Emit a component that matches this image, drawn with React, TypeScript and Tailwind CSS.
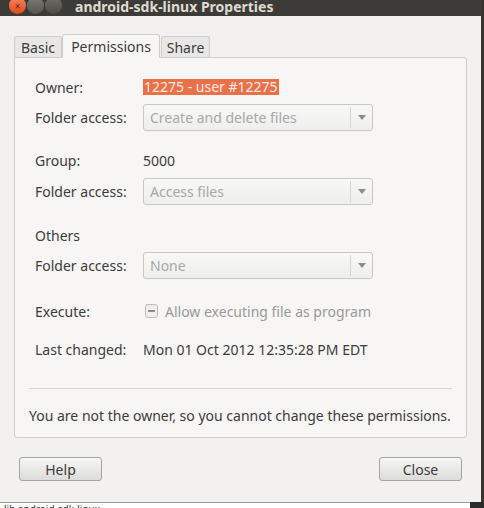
import React from "react";

const font = { fontFamily: '"Noto Sans", "DejaVu Sans", sans-serif' };

function Combo({ value }: { value: string }) {
  return (
    <div className="flex h-[27px] w-[230px] items-stretch rounded-[3px] border border-[#c9c7c3] bg-gradient-to-b from-[#f8f8f7] to-[#eeeeec]">
      <div className="flex flex-1 items-center pl-[6px] text-[14px] text-[#a9a8a5]">{value}</div>
      <div className="my-[2px] w-px bg-[#d6d4d0]" />
      <div className="flex w-[21px] items-center justify-center">
        <svg width="8" height="5" viewBox="0 0 8 5">
          <path d="M0 0 L8 0 L4 5 Z" fill="#8d8c89" />
        </svg>
      </div>
    </div>
  );
}

function Label({ children }: { children: React.ReactNode }) {
  return <div className="w-[108px] shrink-0 text-[14px] text-[#3c3c3c]">{children}</div>;
}

export default function App() {
  return (
    <div className="relative h-[508px] w-[484px] overflow-hidden bg-white" style={font}>
      <div className="flex h-[502px] w-[484px]">
        <div className="flex w-[481px] flex-col">
          {/* title bar */}
          <div className="flex h-[16px] items-center bg-[#3c3b37]">
            <div className="ml-[9px] mt-[-6px] h-[17px] w-[17px] rounded-full bg-gradient-to-b from-[#f48459] to-[#df4a16] text-center text-[10px] leading-[18px] text-[#7a2a10]">
              ×
            </div>
            <div className="ml-[1px] mt-[-6px] h-[17px] w-[17px] rounded-full bg-gradient-to-b from-[#7c7b77] to-[#56554f]" />
            <div className="ml-[1px] mt-[-6px] h-[17px] w-[17px] rounded-full bg-gradient-to-b from-[#6f6e69] to-[#4c4b46]" />
            <div className="ml-[13px] mt-[-3px] text-[14px] font-bold text-[#dfdbd2]">android-sdk-linux Properties</div>
          </div>

          {/* body */}
          <div className="flex flex-1 flex-col bg-[#f2f1f0] px-[14px] pt-[18px]">
            {/* tabs */}
            <div className="flex h-[23px] items-end">
              <div className="flex h-[21px] w-[48px] items-center justify-center rounded-t-[3px] border border-b-0 border-[#cfcdc9] bg-[#e8e7e5] text-[14px] text-[#3c3c3c]">
                Basic
              </div>
              <div className="relative z-10 mb-[-1px] flex h-[24px] w-[98px] items-center justify-center rounded-t-[3px] border border-b-0 border-[#cfcdc9] bg-[#f7f6f5] text-[14px] text-[#3c3c3c]">
                Permissions
              </div>
              <div className="ml-[1px] flex h-[21px] w-[49px] items-center justify-center rounded-t-[3px] border border-b-0 border-[#cfcdc9] bg-[#e8e7e5] text-[14px] text-[#3c3c3c]">
                Share
              </div>
            </div>

            {/* panel */}
            <div className="flex h-[381px] flex-col rounded-b-[3px] rounded-tr-[3px] border border-[#cfcdc9] bg-[#f7f6f5] pl-[20px] pr-[14px]">
              <div className="mt-[21px] flex h-[16px] items-center">
                <Label>Owner:</Label>
                <span className="bg-[#e9714a] px-[1px] text-[14px] leading-[16px] text-[#fbe9e2]">12275 - user #12275</span>
              </div>
              <div className="mt-[9px] flex items-center">
                <Label>Folder access:</Label>
                <Combo value="Create and delete files" />
              </div>

              <div className="mt-[20px] flex h-[18px] items-center">
                <Label>Group:</Label>
                <span className="text-[14px] text-[#3c3c3c]">5000</span>
              </div>
              <div className="mt-[9px] flex items-center">
                <Label>Folder access:</Label>
                <Combo value="Access files" />
              </div>

              <div className="mt-[21px] flex h-[18px] items-center">
                <Label>Others</Label>
              </div>
              <div className="mt-[8px] flex items-center">
                <Label>Folder access:</Label>
                <Combo value="None" />
              </div>

              <div className="mt-[23px] flex h-[18px] items-center">
                <Label>Execute:</Label>
                <div className="ml-[2px] flex h-[14px] w-[13px] items-center justify-center rounded-[3px] border border-[#bdbbb7] bg-[#efeeec]">
                  <div className="h-[2px] w-[7px] bg-[#8e8d8a]" />
                </div>
                <span className="ml-[7px] text-[14px] text-[#9a9996]">Allow executing file as program</span>
              </div>

              <div className="mt-[20px] flex h-[18px] items-center">
                <Label>Last changed:</Label>
                <span className="text-[14px] text-[#3c3c3c]">Mon 01 Oct 2012 12:35:28 PM EDT</span>
              </div>

              <div className="ml-[-6px] mt-[30px] h-px bg-[#d6d4d0]" />

              <div className="ml-[-6px] mt-[17px] flex h-[18px] items-center text-[14px] text-[#3c3c3c]">
                You are not the owner, so you cannot change these permissions.
              </div>
            </div>

            {/* buttons */}
            <div className="mt-[19px] flex justify-between pl-[5px] pr-[5px]">
              <div className="flex h-[24px] w-[83px] items-center justify-center rounded-[3px] border border-[#a7a5a1] bg-gradient-to-b from-[#f6f6f5] to-[#dddcda] text-[14px] text-[#3c3c3c]">
                Help
              </div>
              <div className="flex h-[24px] w-[83px] items-center justify-center rounded-[3px] border border-[#a7a5a1] bg-gradient-to-b from-[#f6f6f5] to-[#dddcda] text-[14px] text-[#3c3c3c]">
                Close
              </div>
            </div>
          </div>
        </div>
        <div className="w-[3px] bg-[#3a3430]" />
      </div>
      {/* background window below */}
      <div className="flex h-[6px] w-[484px]">
        <div className="flex-1 border-t border-[#9c9a96] bg-white pl-[4px] text-[10px] leading-[10px] text-[#333]">
          <span className="block mt-[1px]">lib android-sdk-linux</span>
        </div>
        <div className="w-[14px] bg-[#2c2a28]" />
      </div>
    </div>
  );
}
